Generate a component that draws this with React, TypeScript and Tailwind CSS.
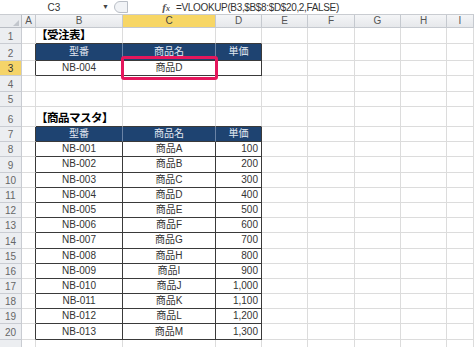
const GRID =
  "grid grid-cols-[22px_14px_87px_93px_46px_46px_47px_46px_46px_1fr]";
const FONT = "font-['Liberation_Sans','Noto_Sans_CJK_JP',sans-serif]";
const COLS = ["A", "B", "C", "D", "E", "F", "G", "H", "I"];

const master = [
  ["NB-001", "商品A", "100"],
  ["NB-002", "商品B", "200"],
  ["NB-003", "商品C", "300"],
  ["NB-004", "商品D", "400"],
  ["NB-005", "商品E", "500"],
  ["NB-006", "商品F", "600"],
  ["NB-007", "商品G", "700"],
  ["NB-008", "商品H", "800"],
  ["NB-009", "商品I", "900"],
  ["NB-010", "商品J", "1,000"],
  ["NB-011", "商品K", "1,100"],
  ["NB-012", "商品L", "1,200"],
  ["NB-013", "商品M", "1,300"],
];

type RowKind = "plain" | "title" | "head" | "data";
type Row = {
  n: number;
  h: string;
  kind: RowKind;
  cells?: string[];
  // the row below starts a table, so B-D get a dark bottom line
  aboveTable?: boolean;
  hideLabel?: boolean;
};

const rows: Row[] = [
  { n: 1, h: "h-[16px]", kind: "title", cells: ["【受注表】"], aboveTable: true },
  { n: 2, h: "h-[17px]", kind: "head", cells: ["型番", "商品名", "単価"] },
  { n: 3, h: "h-[15px]", kind: "data", cells: ["NB-004", "商品D", ""] },
  { n: 4, h: "h-[16px]", kind: "plain" },
  { n: 5, h: "h-[15px]", kind: "plain" },
  { n: 6, h: "h-[20px]", kind: "title", cells: ["【商品マスタ】"], aboveTable: true },
  { n: 7, h: "h-[15.2px]", kind: "head", cells: ["型番", "商品名", "単価"] },
  ...master.map((cells, i) => ({
    n: 8 + i,
    h: "h-[15.2px]",
    kind: "data" as RowKind,
    cells,
  })),
  { n: 21, h: "h-[15px]", kind: "plain", hideLabel: true },
];

function FormulaBar() {
  return (
    <div className="flex h-[15px] items-center border-b border-[#c9ccd1] bg-white text-[10px] text-[#333]">
      <div className="relative flex h-full w-[112px] items-center justify-center">
        <span className="pr-[4px]">C3</span>
        <span className="absolute right-[3px] top-[2px] text-[7px] text-[#444]">▼</span>
      </div>
      <div className="ml-[2px] h-[12px] w-[14px] rounded-l-full border border-[#b9bec6] bg-[#f1f3f6]" />
      <div className="w-[42px] text-right font-['Liberation_Serif',serif] text-[11px] font-bold italic text-[#555]">
        f<span className="text-[8px]">x</span>
      </div>
      <div className="ml-[6px] tracking-[-0.35px]">=VLOOKUP(B3,$B$8:$D$20,2,FALSE)</div>
    </div>
  );
}

function ColumnHeader() {
  return (
    <div className={`${GRID} h-[13px] text-[10px] text-[#555]`}>
      <div className="flex items-end justify-end border-b border-r border-[#b9bdc4] bg-[#e9ebee] pb-[1px] pr-[2px]">
        <span className="block h-0 w-0 rotate-90 border-l-[6px] border-t-[6px] border-l-transparent border-t-[#c2c6cc]" />
      </div>
      {COLS.map((c) => (
        <div
          key={c}
          className={`flex items-center justify-center border-b border-r border-[#c5c9cf] leading-none ${
            c === "C"
              ? "bg-[#f7d665] text-[#444]"
              : "bg-gradient-to-b from-[#f4f5f7] to-[#e6e8eb]"
          }`}
        >
          {c}
        </div>
      ))}
    </div>
  );
}

function SheetRow({ row }: { row: Row }) {
  const inTable = row.kind === "head" || row.kind === "data";
  return (
    <div className={`${GRID} ${row.h}`}>
      <div
        className={`flex items-end justify-center border-b border-r border-[#c9ccd2] pb-[1px] text-[10px] leading-none ${
          row.n === 3 ? "bg-[#f5d469] text-[#333]" : "bg-[#eceef1] text-[#666]"
        }`}
      >
        {row.hideLabel ? null : row.n}
      </div>
      {COLS.map((c, i) => {
        const tableCol = c === "B" || c === "C" || c === "D";
        const right =
          inTable && (c === "A" || tableCol)
            ? row.kind === "head" && (c === "B" || c === "C")
              ? "border-r-[#6a83a6]"
              : "border-r-[#3a3a3a]"
            : "border-r-[#dcdcdc]";
        const bottom =
          tableCol && (inTable || row.aboveTable)
            ? "border-b-[#3a3a3a]"
            : "border-b-[#dcdcdc]";

        if (row.kind === "title" && c === "B") {
          return (
            <div key={c} className={`flex items-end border-b border-r pb-[2px] ${right} ${bottom}`}>
              <span className="whitespace-nowrap text-[11.5px] font-bold leading-none tracking-[-0.5px] text-black">
                {row.cells![0]}
              </span>
            </div>
          );
        }
        if (inTable && tableCol) {
          const v = row.cells![i - 1];
          const tone =
            row.kind === "head"
              ? "bg-[#1e4371] text-[#e3e9f1] justify-center"
              : c === "D"
                ? "justify-end pr-[3px] text-[#333]"
                : "justify-center text-[#333]";
          return (
            <div
              key={c}
              className={`flex items-center border-b border-r text-[10px] leading-none ${tone} ${right} ${bottom}`}
            >
              {v}
            </div>
          );
        }
        return <div key={c} className={`border-b border-r ${right} ${bottom}`} />;
      })}
    </div>
  );
}

export default function App() {
  return (
    <div className={`relative h-[347px] w-[474px] overflow-hidden bg-white ${FONT}`}>
      <FormulaBar />
      <ColumnHeader />
      <div className="flex flex-col">
        {rows.map((row) => (
          <SheetRow key={row.n} row={row} />
        ))}
      </div>
      {/* highlight around C3 */}
      <div className="pointer-events-none absolute left-[121px] top-[56px] h-[24px] w-[97px] rounded-[3px] border-[3px] border-[#e5175c]" />
    </div>
  );
}
